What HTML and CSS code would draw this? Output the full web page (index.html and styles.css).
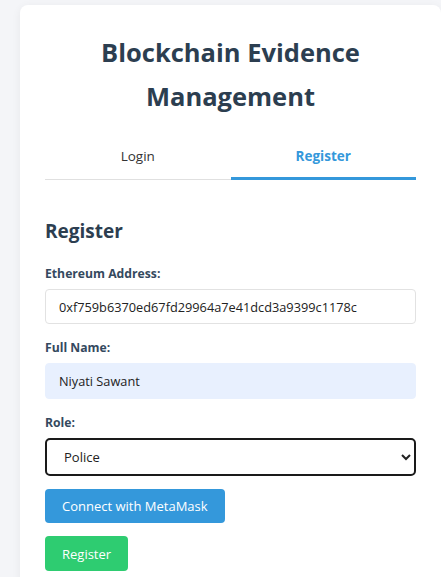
FILE: index.html
```html
<!DOCTYPE html>
<html lang="en">
<head>
<meta charset="utf-8">
<title>Blockchain Evidence Management</title>
<link rel="stylesheet" href="styles.css">
</head>
<body>
<div class="card">
  <h1 class="title">Blockchain Evidence Management</h1>
  <div class="tabs">
    <button class="tab">Login</button>
    <button class="tab active">Register</button>
  </div>
  <h2 class="section">Register</h2>
  <div class="group">
    <label class="label">Ethereum Address:</label>
    <input class="field" type="text" value="0xf759b6370ed67fd29964a7e41dcd3a9399c1178c">
  </div>
  <div class="group">
    <label class="label">Full Name:</label>
    <input class="field autofill" type="text" value="Niyati Sawant">
  </div>
  <div class="group">
    <label class="label">Role:</label>
    <select class="select">
      <option>Police</option>
    </select>
  </div>
  <div class="actions">
    <button class="btn btn-blue">Connect with MetaMask</button>
    <button class="btn btn-green">Register</button>
  </div>
</div>
</body>
</html>
```
FILE: styles.css
```css
html, body {
  margin: 0;
  padding: 0;
}
body {
  background: #f4f5f8;
  font-family: "Open Sans", "Noto Sans", sans-serif;
  color: #333;
  line-height: 1.6;
  overflow: hidden;
}
.card {
  background: #fff;
  margin: 5px 0 0 20px;
  padding: 25px;
  border-radius: 8px;
  box-shadow: 0 2px 10px rgba(0, 0, 0, 0.06);
  min-height: 600px;
}
.title {
  margin: 0 0 15px;
  text-align: center;
  font-size: 25.5px;
  font-weight: 700;
  line-height: 44px;
  color: #2c3e50;
}
.tabs {
  display: flex;
  border-bottom: 1px solid #e0e0e0;
}
.tab {
  flex: 1;
  background: none;
  border: none;
  border-bottom: 3px solid transparent;
  margin-bottom: -1px;
  padding: 12px 0 10px;
  font-family: inherit;
  font-size: 13.5px;
  line-height: 22px;
  color: #333;
}
.tab.active {
  color: #3498db;
  font-weight: 700;
  border-bottom-color: #3498db;
}
.section {
  margin: 36px 0 17px;
  font-size: 19px;
  font-weight: 700;
  color: #2c3e50;
  line-height: 1.6;
}
.group {
  margin-bottom: 13px;
}
.label {
  display: block;
  margin-bottom: 5px;
  font-size: 12.2px;
  font-weight: 700;
  color: #34495e;
  line-height: 21px;
}
.field {
  box-sizing: border-box;
  display: block;
  width: 100%;
  height: 35px;
  padding: 0 13px;
  border: 1px solid #e2e2e2;
  border-radius: 4px;
  font-family: inherit;
  font-size: 12.75px;
  color: #222;
  background: #fff;
}
.field.autofill {
  background: #e8f0fe;
  border-color: #e8f0fe;
  height: 36px;
}
.select {
  box-sizing: border-box;
  display: block;
  width: 100%;
  height: 38px;
  padding: 0 13px;
  border: 2px solid #1a1a1a;
  border-radius: 5px;
  font-family: inherit;
  font-size: 13px;
  color: #222;
  background: #fff;
}
.actions {
  display: flex;
  flex-direction: column;
  align-items: flex-start;
  gap: 13px;
}
.btn {
  border: none;
  border-radius: 4px;
  padding: 0 17px;
  height: 34px;
  font-family: inherit;
  font-size: 13px;
  color: #fff;
}
.btn-blue {
  background: #3498db;
}
.btn-green {
  background: #2ecc71;
  height: 35px;
}
```
